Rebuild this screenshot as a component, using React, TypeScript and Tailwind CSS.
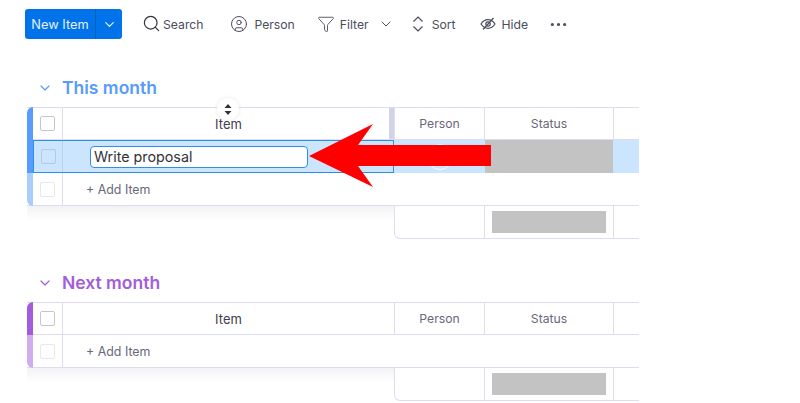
import { ChevronDown, CircleUser, Ellipsis, Funnel, Search } from "lucide-react";

const font = "font-['Inter','Liberation_Sans',sans-serif]";

function ToolItem({ icon, label, className }: { icon: React.ReactNode; label: string; className: string }) {
  return (
    <div className={`flex items-center text-[12.2px] text-[#4b4c5c] ${className}`}>
      {icon}
      <span className="mt-[2px]">{label}</span>
    </div>
  );
}

function Toolbar() {
  return (
    <div className="flex h-[30px] items-center pl-[25px]">
      <div className="flex h-[30px] w-[97px] rounded-[3px] bg-[#0073ea] text-[12.8px] text-[#e6f1fd]">
        <div className="flex w-[71px] items-center justify-center border-r border-[#0060b9] pt-[2px]">New Item</div>
        <div className="flex flex-1 items-center justify-center">
          <ChevronDown size={15} strokeWidth={2} />
        </div>
      </div>
      <ToolItem
        className="ml-[20px]"
        icon={<Search size={19} strokeWidth={1.5} className="mr-[2px] text-[#323338]" />}
        label="Search"
      />
      <ToolItem
        className="ml-[27px]"
        icon={<CircleUser size={18} strokeWidth={1.3} className="mr-[6px]" />}
        label="Person"
      />
      <ToolItem
        className="ml-[22px]"
        icon={<Funnel size={18} strokeWidth={1.2} className="mr-[5px]" />}
        label="Filter"
      />
      <ChevronDown size={16} strokeWidth={1.5} className="ml-[9px] text-[#4b4c5c]" />
      <ToolItem
        className="ml-[18px]"
        icon={
          <svg width="12" height="16" viewBox="0 0 12 16" fill="none" stroke="currentColor" strokeWidth="1.2" className="mr-[8px]">
            <path d="M1.5 5.5 6 1l4.5 4.5M1.5 10.5 6 15l4.5-4.5" />
          </svg>
        }
        label="Sort"
      />
      <ToolItem
        className="ml-[24px]"
        icon={
          <svg width="16" height="14" viewBox="0 0 16 14" fill="none" stroke="currentColor" strokeWidth="1.2" className="mr-[6px]">
            <path d="M1 7c2-3 4.3-4.3 7-4.3S13 4 15 7c-2 3-4.3 4.3-7 4.3S3 10 1 7Z" />
            <circle cx="8" cy="7" r="2.2" />
            <path d="M13.5 1 3 12.5" />
          </svg>
        }
        label="Hide"
      />
      <Ellipsis size={21} strokeWidth={1.7} className="ml-[20px] text-[#4b4c5c]" />
    </div>
  );
}

function Checkbox({ faded }: { faded?: boolean }) {
  return (
    <div
      className={`h-[15px] w-[15px] rounded-[2px] border ${faded ? "border-[#e6e7ef] bg-white" : "border-[#c5c7d0] bg-white"}`}
    />
  );
}

function HeaderRow({ bar, sortHandle }: { bar: string; sortHandle?: boolean }) {
  return (
    <div className="flex h-[33px] border-y border-[#dcdef0] text-[12.2px]">
      <div className={`w-[6px] rounded-tl-[6px] ${bar} -my-px`} />
      <div className="flex w-[30px] items-center justify-center border-r border-[#dcdef0]">
        <Checkbox />
      </div>
      <div className="relative flex w-[331px] items-center justify-center pt-[2px] text-[13px] text-[#3f4049]">
        Item
        {sortHandle && (
          <>
            <div className="absolute left-[154px] top-[-10px] flex h-[22px] w-[22px] items-center justify-center rounded-full bg-white shadow-[0_0_4px_rgba(0,0,0,0.1)]">
              <svg width="8" height="11" viewBox="0 0 8 11" fill="#323338">
                <path d="M4 0 7.5 4H.5ZM4 11 .5 7h7Z" />
              </svg>
            </div>
            <div className="absolute right-0 top-0 h-full w-[5px] bg-[#d0d4e6]" />
          </>
        )}
      </div>
      <div className="flex w-[91px] items-center justify-center border-x border-[#dcdef0] pt-[2px] text-[#676879]">Person</div>
      <div className="flex w-[129px] items-center justify-center border-r border-[#dcdef0] pt-[2px] text-[#676879]">Status</div>
    </div>
  );
}

function SelectedRow() {
  return (
    <div className="flex h-[33px] bg-[#cce5ff]">
      <div className="w-[6px] bg-[#579bfc]" />
      <div className="flex h-full w-[361px] items-center border border-[#2f8fe6]">
        <div className="flex h-full w-[29px] items-center justify-center border-r border-[#b9d3ee]">
          <div className="h-[15px] w-[15px] rounded-[2px] border border-[#b4c9df] bg-[#cce5ff]" />
        </div>
        <div className="ml-[27px] flex h-[22px] w-[218px] items-center rounded-[4px] border border-[#2f8fe6] bg-white pl-[3px] text-[14.3px] text-[#323338]">
          Write proposal
        </div>
      </div>
      <div className="flex w-[91px] items-center justify-center">
        <div className="h-[26px] w-[26px] rounded-full border border-white" />
      </div>
      <div className="w-[128px] bg-[#c3c3c3]" />
    </div>
  );
}

function AddRow({ bar }: { bar: string }) {
  return (
    <div className="flex h-[33px] border-b border-[#dcdef0] text-[12.4px] text-[#676879]">
      <div className={`w-[6px] rounded-bl-[6px] ${bar} -mb-px`} />
      <div className="flex w-[30px] items-center justify-center border-r border-[#dcdef0]">
        <Checkbox faded />
      </div>
      <div className="flex items-center pl-[23px] pt-[2px]">+ Add Item</div>
    </div>
  );
}

function SummaryRow() {
  return (
    <div className="flex h-[33px]">
      <div className="h-[14px] w-[367px] bg-gradient-to-b from-[#f3f3f7] to-white" />
      <div className="w-[91px] rounded-bl-[6px] border-b border-l border-r border-[#dcdef0]" />
      <div className="flex w-[129px] items-center justify-center border-b border-r border-[#dcdef0]">
        <div className="h-[22px] w-[114px] bg-[#c3c3c3]" />
      </div>
      <div className="flex-1 border-b border-[#dcdef0]" />
    </div>
  );
}

function Group({
  title,
  titleColor,
  bar,
  barLight,
  selected,
  className,
}: {
  title: string;
  titleColor: string;
  bar: string;
  barLight: string;
  selected?: boolean;
  className: string;
}) {
  return (
    <section className={`relative w-[612px] ${className}`}>
      <div className={`flex h-[24px] items-center gap-[9px] pl-[10px] ${titleColor}`}>
        <ChevronDown size={16} strokeWidth={1.8} />
        <h2 className="mt-[1px] text-[17.5px] font-semibold">{title}</h2>
      </div>
      <div className="mt-[7px]">
        <HeaderRow bar={bar} sortHandle={selected} />
        {selected && <SelectedRow />}
        <AddRow bar={barLight} />
        <SummaryRow />
      </div>
    </section>
  );
}

export default function App() {
  return (
    <div className={`relative h-[403px] w-[800px] overflow-hidden bg-white pt-[9px] ${font}`}>
      <Toolbar />
      <Group
        className="ml-[27px] mt-[37px]"
        title="This month"
        titleColor="text-[#579bfc]"
        bar="bg-[#579bfc]"
        barLight="bg-[#a9cdfd]"
        selected
      />
      <Group
        className="ml-[27px] mt-[32px]"
        title="Next month"
        titleColor="text-[#a25ddc]"
        bar="bg-[#a25ddc]"
        barLight="bg-[#d0aeee]"
      />
      {/* annotation arrow over the table */}
      <svg width="800" height="403" viewBox="0 0 800 403" className="absolute left-0 top-0">
        <path d="M309 156 373 124 358 145H491V166H358L373 187Z" fill="#ff0000" />
      </svg>
    </div>
  );
}
